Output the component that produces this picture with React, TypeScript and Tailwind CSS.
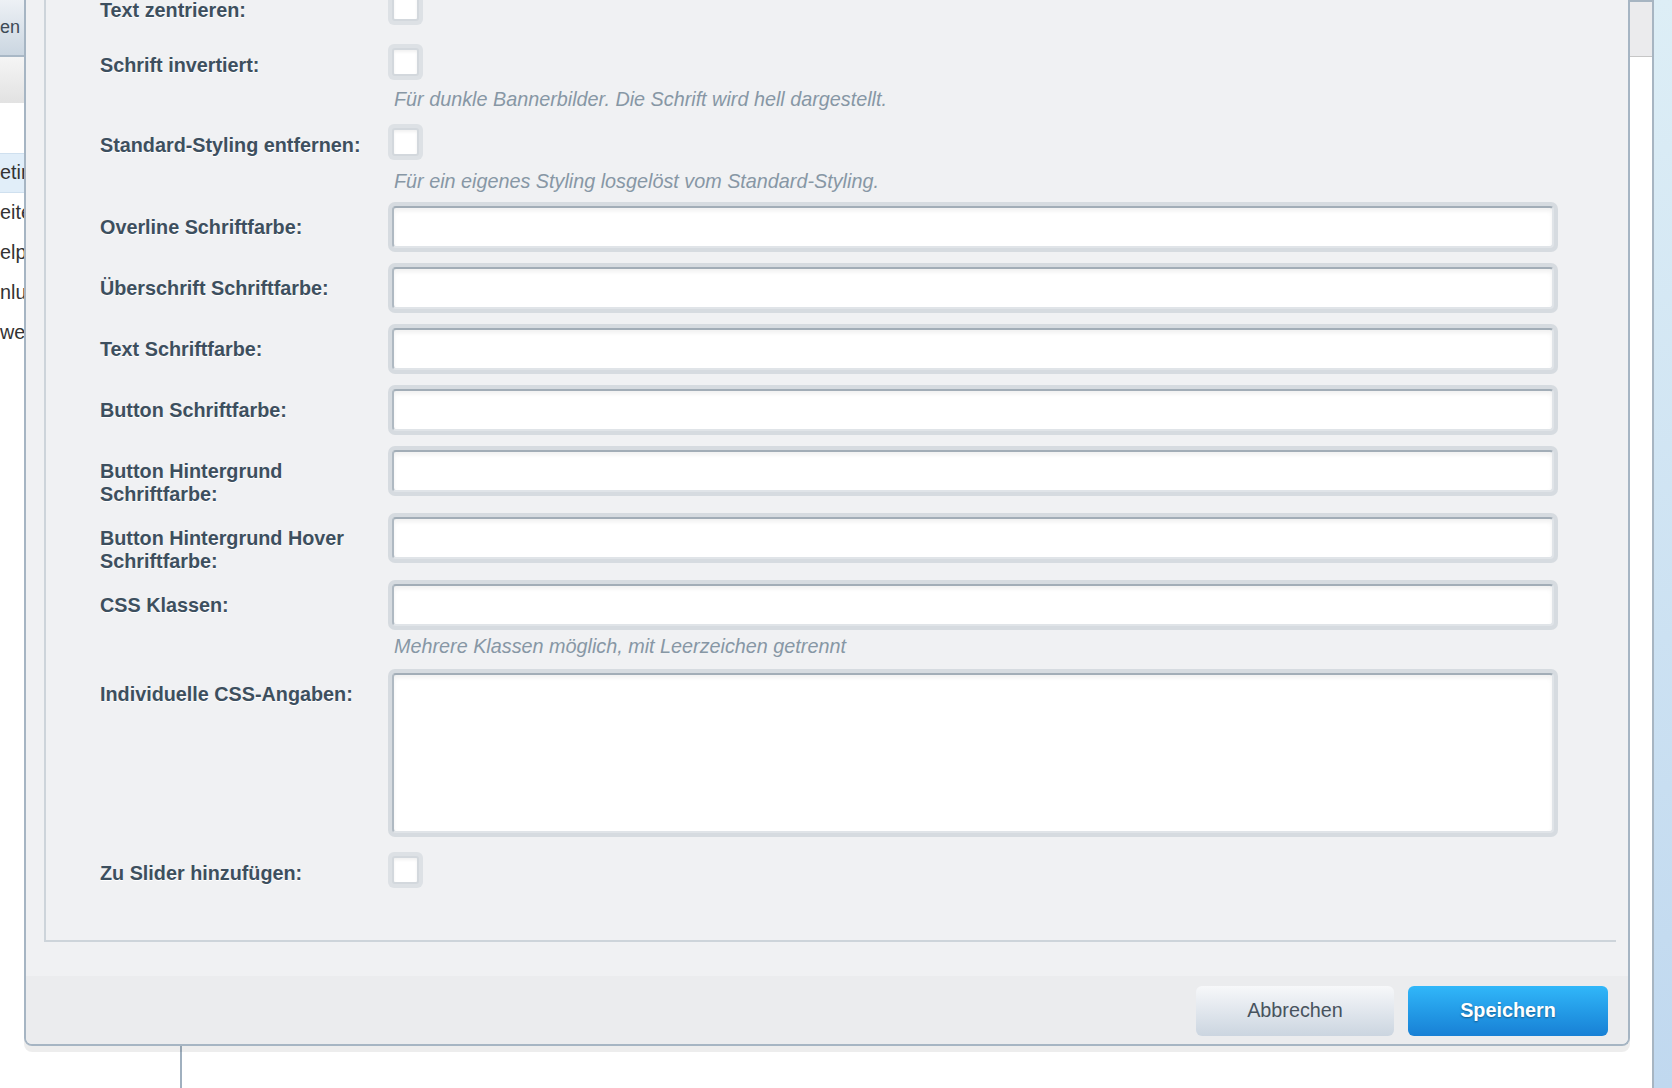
import React from "react";

const labelCls =
  "w-[288px] shrink-0 font-bold text-[#3d4f5e] leading-[23px] [text-shadow:0_1px_0_#fff]";

function Checkbox() {
  return (
    <div className="h-[36px] w-[35px] rounded-[6px] bg-[#dde1e5] p-[4px]">
      <div className="h-full w-full rounded-[3px] border-2 border-[#d3d8dd] bg-white shadow-[inset_0_2px_3px_rgba(0,0,0,0.06)]" />
    </div>
  );
}

function Hint({ text, className }: { text: string; className: string }) {
  return (
    <div className={"pl-[6px] italic leading-[23px] text-[#8797a5] " + className}>
      {text}
    </div>
  );
}

function CheckRow({
  label,
  hint,
  className,
  hintClass,
}: {
  label: string;
  hint?: string;
  className: string;
  hintClass?: string;
}) {
  return (
    <div className={className}>
      <div className="flex h-[36px] items-center">
        <div className={labelCls + " pt-[6px]"}>{label}</div>
        <Checkbox />
      </div>
      {hint && <div className="ml-[288px]"><Hint text={hint} className={hintClass ?? ""} /></div>}
    </div>
  );
}

function TextRow({ label, tall }: { label: string; tall?: boolean }) {
  return (
    <div className={"flex items-start " + (tall ? "h-[56px]" : "h-[50px]")}>
      <div className={labelCls + " pt-[13.5px]"}>{label}</div>
      <div className="h-[50px] flex-1 rounded-[7px] bg-[#d6dbe0] p-[4px]">
        <input
          type="text"
          className="h-full w-full rounded-[4px] border-2 border-[#e0e4e8] border-t-[#a2adb7] border-l-[#afb9c2] bg-white shadow-[inset_0_3px_4px_rgba(0,0,0,0.06)] outline-none"
        />
      </div>
    </div>
  );
}

const sideRows = ["etin", "eite", "elpr", "nlu", "we"];

export default function App() {
  return (
    <div className="relative h-[1088px] w-[1672px] overflow-hidden bg-white font-['Liberation_Sans',Arial,sans-serif] text-[19.8px]">
      {/* page behind the dialog */}
      <div className="flex h-full">
        <div className="w-[182px] shrink-0 border-r-2 border-[#a0b0bf]">
          <div className="flex h-[57px] items-center border-b-2 border-[#a9b8c6] bg-linear-to-b from-[#edf1f5] to-[#cbd6e1] text-[18px] text-[#3e4a56]">
            <span>en</span>
          </div>
          <div className="h-[46px] bg-linear-to-b from-[#f5f5f5] to-[#e2e2e2]" />
          <div className="pt-[50px]">
            {sideRows.map((r, i) => (
              <div
                key={r}
                className={
                  "flex h-[40px] items-center whitespace-nowrap text-[#333] " +
                  (i === 0 ? "border-y border-[#cfe0ef] bg-[#e1eef9]" : "")
                }
              >
                {r}
              </div>
            ))}
          </div>
        </div>
        <div className="flex-1">
          <div className="h-[57px] border-t-2 border-b border-t-[#a7b5c2] border-b-[#c6c6c6] bg-[#ebebed]" />
        </div>
        <div className="w-[20px] shrink-0 border-l-2 border-[#a7b5c2] bg-linear-to-b from-[#ddeef6] to-[#c0d8ef]" />
      </div>

      {/* dialog */}
      <div className="absolute left-[24px] top-[-40px] w-[1606px] rounded-b-[8px] border-x-2 border-b-2 border-[#a6b5c3] bg-[#f0f1f3] shadow-[0_6px_0_rgba(0,0,0,0.07)]">
        <div className="ml-[18px] mr-[12px] border-b-2 border-l-2 border-[#cdd4da] pb-[52px] pl-[54px] pr-[58px] pt-[29px]">
          <CheckRow label="Text zentrieren:" className="" />
          <CheckRow
            label="Schrift invertiert:"
            hint="Für dunkle Bannerbilder. Die Schrift wird hell dargestellt."
            className="mt-[19px]"
            hintClass="mt-[7.5px]"
          />
          <CheckRow
            label="Standard-Styling entfernen:"
            hint="Für ein eigenes Styling losgelöst vom Standard-Styling."
            className="mt-[13.5px]"
            hintClass="mt-[9.5px]"
          />
          <div className="mt-[9.5px] flex flex-col gap-[11px]">
            <TextRow label="Overline Schriftfarbe:" />
            <TextRow label="Überschrift Schriftfarbe:" />
            <TextRow label="Text Schriftfarbe:" />
            <TextRow label="Button Schriftfarbe:" />
            <TextRow label="Button Hintergrund Schriftfarbe:" tall />
            <TextRow label="Button Hintergrund Hover Schriftfarbe:" tall />
            <TextRow label="CSS Klassen:" />
          </div>
          <div className="ml-[288px]">
            <Hint text="Mehrere Klassen möglich, mit Leerzeichen getrennt" className="mt-[4.5px]" />
          </div>
          <div className="mt-[11.5px] flex items-start">
            <div className={labelCls + " pt-[13.5px]"}>Individuelle CSS-Angaben:</div>
            <div className="h-[168px] flex-1 rounded-[7px] bg-[#d6dbe0] p-[4px]">
              <textarea className="block h-full w-full resize-none rounded-[4px] border-2 border-[#e0e4e8] border-t-[#a2adb7] border-l-[#afb9c2] bg-white shadow-[inset_0_3px_4px_rgba(0,0,0,0.06)] outline-none" />
            </div>
          </div>
          <CheckRow label="Zu Slider hinzufügen:" className="mt-[15px]" />
        </div>
        <div className="mt-[34px] flex h-[68px] justify-end gap-[14px] rounded-b-[6px] bg-[#ebecee] pr-[20px] pt-[10px]">
          <button className="h-[50px] w-[198px] rounded-[6px] bg-linear-to-b from-[#f7f8fa] to-[#cbd5e0] text-[#48535e]">
            Abbrechen
          </button>
          <button className="h-[50px] w-[200px] rounded-[6px] bg-linear-to-b from-[#31b7f9] to-[#1880d5] font-bold text-white [text-shadow:0_1px_2px_rgba(0,0,0,0.4)]">
            Speichern
          </button>
        </div>
      </div>
    </div>
  );
}
